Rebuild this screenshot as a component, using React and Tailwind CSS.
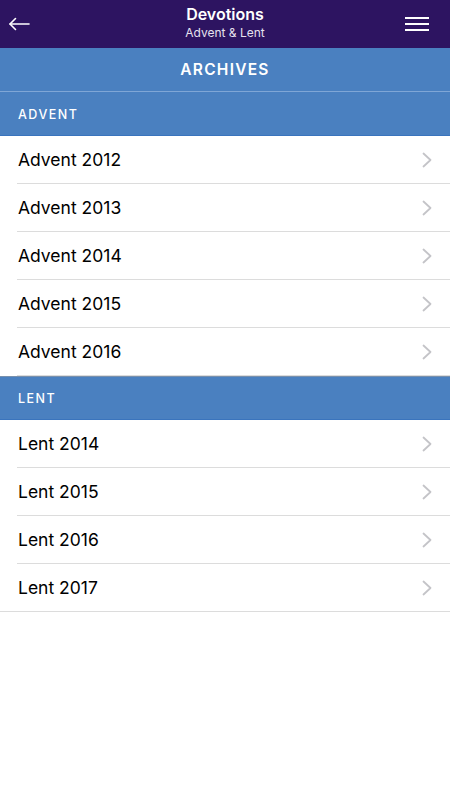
const SECTIONS = [
  { title: "Advent", items: ["Advent 2012", "Advent 2013", "Advent 2014", "Advent 2015", "Advent 2016"] },
  { title: "Lent", items: ["Lent 2014", "Lent 2015", "Lent 2016", "Lent 2017"] },
];

function BackArrow() {
  return (
    <svg width="22" height="14" viewBox="0 0 22 14" fill="none" stroke="white" strokeWidth="1.6" strokeLinecap="round" strokeLinejoin="round">
      <path d="M21 7H2" />
      <path d="M7.5 1.5L2 7l5.5 5.5" />
    </svg>
  );
}

function Chevron() {
  return (
    <svg width="10" height="16" viewBox="0 0 10 16" fill="none" stroke="#c4c4c8" strokeWidth="1.8" strokeLinecap="round" strokeLinejoin="round">
      <path d="M1.5 1.5L8.5 8l-7 6.5" />
    </svg>
  );
}

function Row({ label, last }) {
  return (
    <div className="flex h-12 items-center pl-[18px] pr-[18px] relative">
      <span className="flex-1 text-[17.5px] text-black">{label}</span>
      <Chevron />
      <div className={`absolute bottom-0 right-0 h-px bg-[#dcdcdc] ${last ? "left-0" : "left-[17px]"}`} />
    </div>
  );
}

export default function App() {
  return (
    <div className="w-[450px] h-[800px] bg-white font-['Inter','Liberation_Sans',sans-serif]">
      {/* top bar */}
      <header className="h-12 bg-[#2d1461] flex items-center px-2 text-white">
        <div className="w-12 flex items-center">
          <BackArrow />
        </div>
        <div className="flex-1 flex flex-col items-center leading-none -mt-1">
          <span className="text-[16px] font-semibold">Devotions</span>
          <span className="text-[12px] text-[#e6e2ee] mt-[5px]">Advent &amp; Lent</span>
        </div>
        <div className="w-12 flex justify-end pr-[13px]">
          <div className="flex flex-col gap-1">
            <span className="block w-6 h-0.5 bg-white" />
            <span className="block w-6 h-0.5 bg-white" />
            <span className="block w-6 h-0.5 bg-white" />
          </div>
        </div>
      </header>

      {/* archives banner */}
      <div className="h-11 bg-[#4a80c0] border-b border-[#7fa6d6] flex items-center justify-center">
        <span className="text-white text-[15.5px] font-semibold tracking-[0.08em]">ARCHIVES</span>
      </div>

      {SECTIONS.map((s, si) => (
        <section key={s.title}>
          <div
            className={`h-11 bg-[#4a80c0] border-b border-[#3a74bd] flex items-center pl-[18px] pt-[3px] ${
              si > 0 ? "border-t border-t-[#7890ad]" : ""
            }`}
          >
            <span className="text-white text-[12.5px] font-medium tracking-[0.12em] uppercase">{s.title}</span>
          </div>
          {s.items.map((it, i) => (
            <Row key={it} label={it} last={si === SECTIONS.length - 1 && i === s.items.length - 1} />
          ))}
        </section>
      ))}
    </div>
  );
}
